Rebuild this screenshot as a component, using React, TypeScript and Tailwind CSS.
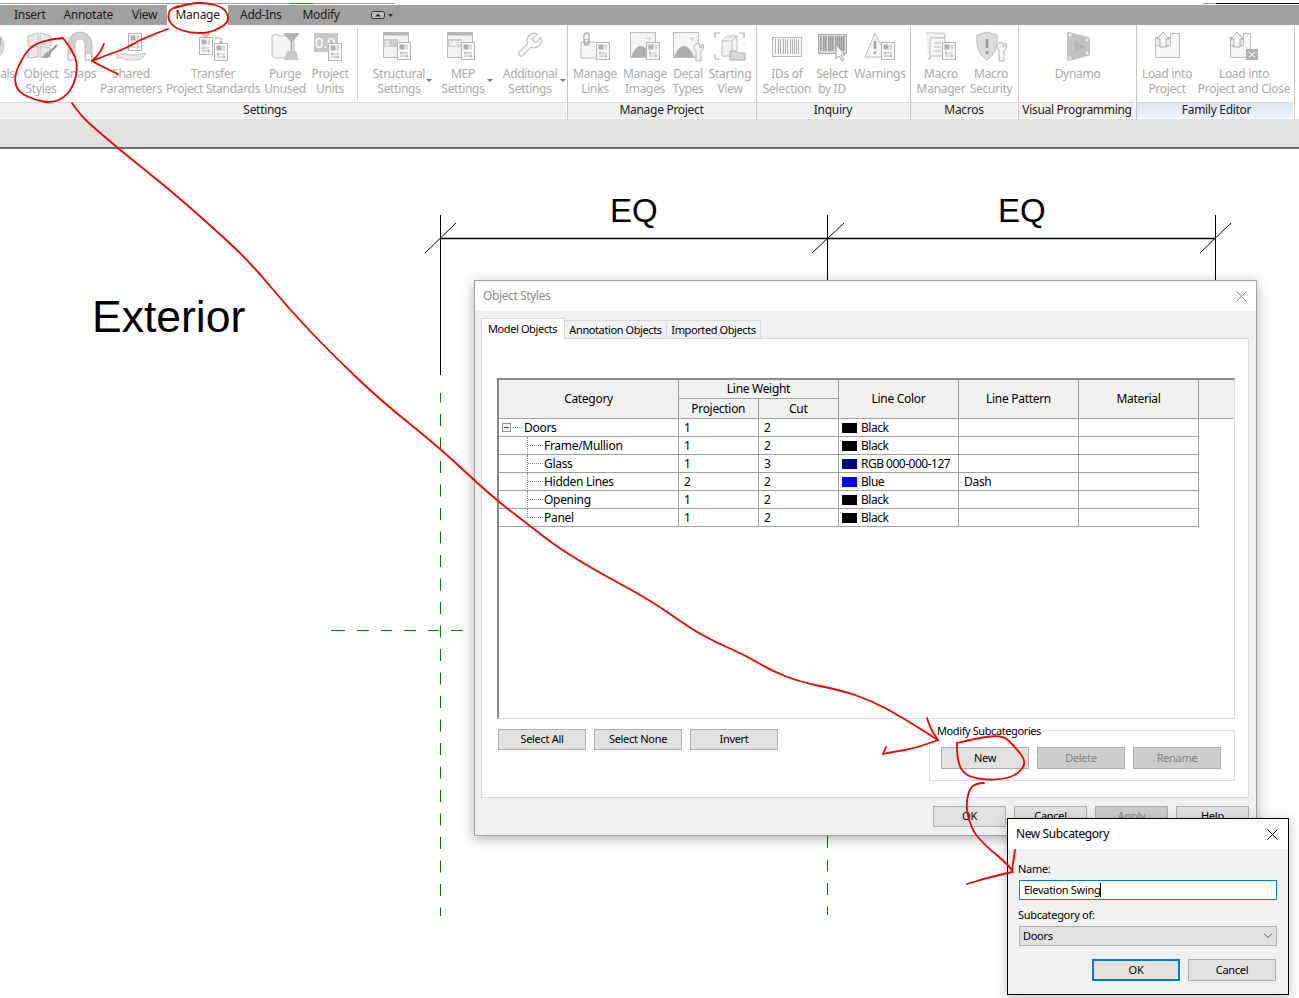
import type { ReactNode } from "react";

const line = "#bcbcbc";
const soft = "#e9e9e9";

// little document that sits on most of the ribbon icons
function Badge({ x, y }: { x: number; y: number }) {
  return (
    <g transform={`translate(${x} ${y})`}>
      <rect x="0.5" y="0.5" width="13" height="17" fill="#f9f9f9" stroke="#b4b4b4" />
      <rect x="2.5" y="2.5" width="5" height="5" fill="#b0b0b0" />
      <rect x="8.5" y="2.5" width="2.5" height="5" fill="#d4d4d4" />
      <path d="M3 11h8M3 14h8M5 9.5l-2 1.5 2 1.5M9 12.5l2 1.5-2 1.5" stroke="#aaa" strokeWidth="0.8" fill="none" />
    </g>
  );
}

function Ico({ children }: { children: ReactNode }) {
  return (
    <svg width="32" height="32" viewBox="0 0 32 32" className="shrink-0 overflow-visible">
      {children}
    </svg>
  );
}

const Materials = () => (
  <Ico>
    <circle cx="16" cy="16" r="14" fill="#d8d8d8" stroke="#c4c4c4" />
    <path d="M6 8h7v7H6zM20 8h7v7h-7zM13 15h7v7h-7zM6 22h7v5H6z" fill="#a9a9a9" />
  </Ico>
);

const ObjectStyles = () => (
  <Ico>
    <path d="M3 6l10-3v11L3 17zM15 3l11 3v10l-11-2zM3 19l10-3v11l-10 1zM15 16l10 2v9l-10 0z" fill={soft} stroke={line} />
    <path d="M32 15l-9 9" stroke="#9a9a9a" strokeWidth="2.4" />
    <path d="M24 22c-3 0-5 1-5 3l-2 3c4 1 8-1 9-4z" fill="#a2a2a2" />
  </Ico>
);

const Magnet = () => (
  <Ico>
    <path d="M4 30V14a12 12 0 0 1 24 0v16h-7V14a5 5 0 0 0-10 0v16z" fill="#d2d2d2" stroke="#bdbdbd" />
    <path d="M4.500 23h6v7h-6zM21.500 23h6v7h-6z" fill="#fafafa" stroke="#bdbdbd" />
  </Ico>
);

const SharedParams = () => (
  <Ico>
    <Badge x={13} y={3} />
    <path d="M2 24h8l6 1h6l9-2c-2 4-6 7-10 7H10l-3-2H2z" fill={soft} stroke="#c0c0c0" />
  </Ico>
);

const Transfer = () => (
  <Ico>
    <path d="M3 3h11l-5.500 6z" fill="#c6c6c6" />
    <Badge x={2} y={7} />
    <path d="M18 8h6v5M22 11l2 2 2-2" stroke="#a6a6a6" fill="none" />
    <path d="M18 14h11l-5.500 6z" fill="#c6c6c6" />
    <Badge x={17} y={13} />
  </Ico>
);

const Purge = () => (
  <Ico>
    <path d="M3 6c3-2 5-2 8 0h14v22H8c-3 0-5-1-5-3z" fill="#f4f4f4" stroke={line} />
    <path d="M14 3h17l-8.500 10z" fill="#b2b2b2" />
    <path d="M22.500 12v10" stroke="#aaa" strokeWidth="1.600" />
    <path d="M18 21h9l3 9H15z" fill="#c9c9c9" />
  </Ico>
);

const ProjectUnits = () => (
  <Ico>
    <rect x="0" y="3" width="24" height="19" fill="#c6c6c6" />
    <text x="1" y="18" fontSize="15" fill="#fff" fontFamily="Liberation Sans, sans-serif">0.0</text>
    <Badge x={14} y={13} />
  </Ico>
);

function SettingsIco({ label }: { label: string }) {
  return (
    <Ico>
      <rect x="0.500" y="2.500" width="25" height="25" fill="#f3f3f3" stroke={line} />
      <rect x="0.500" y="2.500" width="25" height="3" fill="#b6b6b6" />
      <rect x="0.500" y="9" width="15" height="8" fill="#cbcbcb" />
      <text x="2" y="15.500" fontSize="6.500" fontWeight="700" fill="#fff" fontFamily="Liberation Sans, sans-serif">{label}</text>
      <Badge x={14} y={12} />
    </Ico>
  );
}

const Wrench = () => (
  <Ico>
    <path
      transform="translate(1 1) scale(1.200)"
      d="M14.700 6.300a1 1 0 0 0 0 1.400l1.600 1.600a1 1 0 0 0 1.400 0l3.770-3.770a6 6 0 0 1-7.940 7.940l-6.910 6.910a2.120 2.120 0 0 1-3-3l6.910-6.910a6 6 0 0 1 7.940-7.940l-3.760 3.760z"
      fill="#f6f6f6"
      stroke="#bcbcbc"
      strokeWidth="0.900"
    />
  </Ico>
);

const Links = () => (
  <Ico>
    <path d="M2 12h14l6 6v10H2z" fill="#f5f5f5" stroke={line} />
    <rect x="5" y="3" width="5" height="12" rx="2.500" fill="none" stroke="#aaa" strokeWidth="1.300" />
    <circle cx="7.500" cy="11" r="2" fill="none" stroke="#aaa" />
    <Badge x={17} y={12} />
  </Ico>
);

const Images = () => (
  <Ico>
    <rect x="1.500" y="2.500" width="25" height="25" fill="#f4f4f4" stroke={line} />
    <path d="M2 27c3-8 7-11 10-11s8 4 10 11z" fill="#adadad" />
    <circle cx="20" cy="9" r="2" fill="#ddd" />
    <Badge x={17} y={12} />
  </Ico>
);

const Decals = () => (
  <Ico>
    <rect x="1.500" y="2.500" width="25" height="25" fill="#f4f4f4" stroke={line} />
    <path d="M2 27c3-8 7-11 10-11s8 4 10 11z" fill="#adadad" />
    <circle cx="20" cy="9" r="2" fill="#ddd" />
    <path d="M24 14a4.500 4.500 0 0 1 4 0v4l2-1v-3a4 4 0 0 1-1 7v10h-5V21a4 4 0 0 1 0-7z" fill="#f5f5f5" stroke="#b0b0b0" />
  </Ico>
);

const StartingView = () => (
  <Ico>
    <path d="M1 8V3h5M25 3h5v5M1 24v5h5M30 15v-1" fill="none" stroke="#adadad" strokeWidth="1.200" />
    <path d="M8 11l5-5h10v15l-5 5H8z" fill="#f2f2f2" stroke={line} />
    <path d="M8 11h10v15M18 11l5-5" fill="none" stroke={line} />
    <path d="M16 21h6l2 2h7v7H16z" fill="#dadada" stroke="#b0b0b0" />
  </Ico>
);

function Barcode({ dark }: { dark?: boolean }) {
  const bars = [3, 6, 8, 11, 13, 15, 18, 20, 22, 24, 26];
  return (
    <>
      {bars.map((b) => (
        <rect key={b} x={b + 1} y={dark ? 6 : 9} width={dark ? 1.600 : 1} height="15" fill={dark ? "#9c9c9c" : "#b3b3b3"} />
      ))}
    </>
  );
}

const IdsOf = () => (
  <Ico>
    <rect x="1.500" y="7.500" width="29" height="19" fill="#f7f7f7" stroke="#b8b8b8" />
    <Barcode />
  </Ico>
);

const SelectId = () => (
  <Ico>
    <rect x="2.500" y="4.500" width="28" height="19" fill="#dedede" stroke="#a6a6a6" />
    <Barcode dark />
    <path d="M20 14v15l3-3 3 5 2-1-3-5h4z" fill="#f5f5f5" stroke="#a6a6a6" />
  </Ico>
);

const Warnings = () => (
  <Ico>
    <path d="M11 3l-10 24h22z" fill="#f4f4f4" stroke={line} />
    <path d="M11 11v8M11 21.500v2.500" stroke="#a2a2a2" strokeWidth="2.600" />
    <Badge x={17} y={12} />
  </Ico>
);

const MacroManager = () => (
  <Ico>
    <path d="M1 3h16c2 0 3 1 3 3v2H6v18c0 2-1 3-3 3" fill="#f2f2f2" stroke={line} />
    <path d="M5 8h15v18H8c-2 0-3 1-3 3zM9 13h7M9 17h7M9 21h7" fill="#f7f7f7" stroke={line} />
    <Badge x={17} y={12} />
  </Ico>
);

const MacroSecurity = () => (
  <Ico>
    <path d="M12 2l10 3c1 10-1 19-10 25C3 24 1 15 2 5z" fill="#dcdcdc" stroke={line} />
    <path d="M12 9v9M12 21v3" stroke="#9c9c9c" strokeWidth="2.800" />
    <path d="M24 13a4.500 4.500 0 0 1 4 0v4l2-1v-3a4 4 0 0 1-1 7v11h-5V20a4 4 0 0 1 0-7z" fill="#f5f5f5" stroke="#b0b0b0" />
  </Ico>
);

const Dynamo = () => (
  <Ico>
    <path d="M7 2l19 5c2 1 2 2 2 3v13c0 2 0 2-2 3L7 31c-2 0-2-1-2-2V4c0-2 0-2 2-2z" fill="#c2c2c2" />
    <path d="M13 11l10 6-10 6z" fill="#b2b2b2" />
    <circle cx="8" cy="5" r="1.400" fill="#eee" />
    <circle cx="25" cy="10" r="1.400" fill="#eee" />
    <circle cx="25" cy="23" r="1.400" fill="#eee" />
    <circle cx="8" cy="28" r="1.400" fill="#eee" />
  </Ico>
);

const LoadProject = () => (
  <Ico>
    <path d="M4.500 15.500v12h24v-24h-9v12z" fill="#f6f6f6" stroke={line} />
    <rect x="4.500" y="7.500" width="15" height="8" fill="#ededed" stroke={line} />
    <path d="M12 2l6 7h-3v8H9V9H6z" fill="#f8f8f8" stroke="#a8a8a8" />
  </Ico>
);

const LoadClose = () => (
  <Ico>
    <path d="M2.500 15.500v12h20v-24h-7v12z" fill="#f6f6f6" stroke={line} />
    <rect x="2.500" y="7.500" width="13" height="8" fill="#ededed" stroke={line} />
    <path d="M9 2l6 7h-3v8H6V9H3z" fill="#f8f8f8" stroke="#a8a8a8" />
    <rect x="18" y="19" width="12" height="11" fill="#b4b4b4" />
    <path d="M21 22l6 5M27 22l-6 5" stroke="#fff" />
  </Ico>
);

function Caret({ className }: { className: string }) {
  return <span className={`absolute top-[54px] h-0 w-0 border-x-[3px] border-t-[3px] border-x-transparent border-t-[#777] ${className}`} />;
}

function RibbonItem({ icon, a, b, className, caret }: { icon: ReactNode; a: string; b?: string; className: string; caret?: string }) {
  return (
    <div className={`relative flex shrink-0 flex-col items-center pt-[5px] ${className}`}>
      {icon}
      <span className="mt-[4px] whitespace-nowrap leading-[15px]">{a}</span>
      {b && <span className="whitespace-nowrap leading-[15px]">{b}</span>}
      {caret && <Caret className={caret} />}
    </div>
  );
}

function RibbonPanel({ title, className, foot, children }: { title: string; className: string; foot?: string; children: ReactNode }) {
  return (
    <div className={`flex h-[94px] shrink-0 flex-col border-r border-[#c6c6c6] ${className}`}>
      <div className="flex h-[77px] text-[#a9a9a9]">{children}</div>
      <div className={`mr-px flex h-[16px] items-center justify-center border-t border-[#d8d8d8] pb-[2px] leading-[14px] whitespace-nowrap text-[#222] ${foot ?? "bg-[#f0f0f0]"}`}>
        {title}
      </div>
    </div>
  );
}

function Btn({ children, className, off, primary }: { children: string; className: string; off?: boolean; primary?: boolean }) {
  return (
    <div
      className={`flex shrink-0 items-center justify-center text-[11px] tracking-[-0.3px] ${primary ? "border-2 border-[#0078d7]" : "border border-[#adadad]"} ${off ? "bg-[#cccccc] text-[#838383]" : "bg-[#e1e1e1] text-black"} ${className}`}
    >
      {children}
    </div>
  );
}

const rows = [
  { name: "Frame/Mullion", p: "1", c: "2", color: "Black", sw: "bg-black" },
  { name: "Glass", p: "1", c: "3", color: "RGB 000-000-127", sw: "bg-[#00007f]" },
  { name: "Hidden Lines", p: "2", c: "2", color: "Blue", sw: "bg-[#0000ff]", pat: "Dash" },
  { name: "Opening", p: "1", c: "2", color: "Black", sw: "bg-black" },
  { name: "Panel", p: "1", c: "2", color: "Black", sw: "bg-black", last: true },
];

function Cell({ children, className = "" }: { children?: ReactNode; className?: string }) {
  return <div className={`flex h-[17px] items-center border-r border-[#a0a0a0] ${className}`}>{children}</div>;
}

function Row({ first, p, c, color, sw, pat }: { first: ReactNode; p: string; c: string; color: string; sw: string; pat?: string }) {
  return (
    <div className="grid h-[18px] w-[700px] grid-cols-[180px_80px_80px_120px_120px_120px] border-b border-[#a0a0a0]">
      <Cell>{first}</Cell>
      <Cell className="pl-[5px]">{p}</Cell>
      <Cell className="pl-[5px]">{c}</Cell>
      <Cell className="pl-[3px] tracking-[-0.5px]">
        <span className={`mr-[4px] h-[10px] w-[15px] ${sw}`} />
        {color}
      </Cell>
      <Cell className="pl-[5px]">{pat}</Cell>
      <Cell />
    </div>
  );
}

function ObjectStylesDialog() {
  return (
    <div className="absolute left-[474px] top-[280px] flex h-[556px] w-[783px] flex-col border border-[#a0a0a0] bg-[#f0f0f0] shadow-[0_3px_12px_rgba(0,0,0,0.3)]">
      <div className="flex h-[30px] shrink-0 items-center justify-between bg-white pl-[8px] pr-[9px] tracking-[-0.4px] text-[#8c8c8c]">
        <span>Object Styles</span>
        <svg width="11" height="11" viewBox="0 0 11 11"><path d="M0.500 0.500l10 10M10.500 0.500l-10 10" stroke="#8c8c8c" /></svg>
      </div>
      <div className="mt-[7px] flex h-[21px] items-end whitespace-nowrap pl-[6px] text-[11px] tracking-[-0.4px]">
        <div className="relative z-10 flex h-[21px] w-[84px] items-start border-x border-t border-[#d9d9d9] bg-white pl-[6px] pt-[2px]">Model Objects</div>
        <div className="flex h-[19px] w-[102px] items-center justify-center border-r border-t border-[#d9d9d9]">Annotation Objects</div>
        <div className="flex h-[19px] w-[94px] items-center justify-center border-r border-t border-[#d9d9d9]">Imported Objects</div>
      </div>
      <div className="-mt-px ml-[6px] h-[460px] w-[768px] border border-[#d9d9d9] bg-white pl-[15px] pt-[39px]">
        <div className="h-[341px] w-[738px] border-b border-l-2 border-r border-t-2 border-[#dcdcdc] border-l-[#8a8a8a] border-t-[#8a8a8a]">
          <div className="grid h-[39px] grid-cols-[180px_160px_120px_120px_120px_1fr] border-b border-[#a0a0a0] bg-[#f0f0f0]">
            <div className="flex items-center justify-center border-r border-[#a0a0a0]">Category</div>
            <div className="flex flex-col border-r border-[#a0a0a0]">
              <div className="flex h-[19px] items-center justify-center border-b border-[#a0a0a0]">Line Weight</div>
              <div className="grid flex-1 grid-cols-2">
                <div className="flex items-center justify-center border-r border-[#a0a0a0]">Projection</div>
                <div className="flex items-center justify-center">Cut</div>
              </div>
            </div>
            <div className="flex items-center justify-center border-r border-[#a0a0a0]">Line Color</div>
            <div className="flex items-center justify-center border-r border-[#a0a0a0]">Line Pattern</div>
            <div className="flex items-center justify-center border-r border-[#a0a0a0]">Material</div>
            <div />
          </div>
          <Row
            p="1"
            c="2"
            color="Black"
            sw="bg-black"
            first={
              <div className="flex items-center pl-[3px]">
                <span className="flex h-[9px] w-[9px] items-center justify-center border border-[#919191] bg-[#efefef]">
                  <span className="h-px w-[5px] bg-[#444]" />
                </span>
                <span className="mx-[2px] w-[9px] border-t border-dotted border-[#888]" />
                <span>Doors</span>
              </div>
            }
          />
          {rows.map((r) => (
            <Row
              key={r.name}
              p={r.p}
              c={r.c}
              color={r.color}
              sw={r.sw}
              pat={r.pat}
              first={
                <div className="ml-[28px] flex h-full items-center">
                  <span className={`w-px self-start border-l border-dotted border-[#888] ${r.last ? "h-[9px]" : "h-[18px]"}`} />
                  <span className="w-[15px] border-t border-dotted border-[#888]" />
                  <span className="pl-px">{r.name}</span>
                </div>
              }
            />
          ))}
        </div>
        <div className="mt-[10px] flex w-[738px] items-start justify-between">
          <div className="flex gap-[8px] pl-px">
            <Btn className="h-[21px] w-[88px]">Select All</Btn>
            <Btn className="h-[21px] w-[88px]">Select None</Btn>
            <Btn className="h-[21px] w-[88px]">Invert</Btn>
          </div>
          <div className="relative mt-px flex h-[51px] w-[306px] gap-[8px] border border-[#dcdcdc] pl-[11px] pt-[16px]">
            <span className="absolute -top-[8px] left-[7px] whitespace-nowrap bg-white pr-[2px] text-[11px] leading-[15px] tracking-[-0.4px]">Modify Subcategories</span>
            <Btn className="h-[22px] w-[88px]">New</Btn>
            <Btn className="h-[22px] w-[88px]" off>Delete</Btn>
            <Btn className="h-[22px] w-[88px]" off>Rename</Btn>
          </div>
        </div>
      </div>
      <div className="mt-[8px] flex w-[774px] justify-end gap-[8px]">
        <Btn className="h-[21px] w-[73px]">OK</Btn>
        <Btn className="h-[21px] w-[73px]">Cancel</Btn>
        <Btn className="h-[21px] w-[73px]" off>Apply</Btn>
        <Btn className="h-[21px] w-[73px]">Help</Btn>
      </div>
    </div>
  );
}

function NewSubcategoryDialog() {
  return (
    <div className="absolute left-[1007px] top-[818px] flex h-[177px] w-[282px] flex-col border border-black bg-[#f0f0f0] shadow-[0_3px_12px_rgba(0,0,0,0.25)]">
      <div className="flex h-[30px] shrink-0 items-center justify-between bg-white pl-[8px] pr-[10px] tracking-[-0.4px] text-black">
        <span>New Subcategory</span>
        <svg width="11" height="11" viewBox="0 0 11 11"><path d="M0.500 0.500l10 10M10.500 0.500l-10 10" stroke="#000" /></svg>
      </div>
      <div className="flex flex-col px-[10px] text-[11px] tracking-[-0.3px] text-black">
        <span className="mt-[12px] leading-[15px]">Name:</span>
        <div className="ml-px mt-[4px] flex h-[20px] w-[258px] items-center border border-[#0078d7] bg-white pl-[4px]">
          <span>Elevation Swing</span>
          <span className="h-[14px] w-px bg-black" />
        </div>
        <span className="mt-[7px] leading-[15px]">Subcategory of:</span>
        <div className="ml-px mt-[4px] flex h-[20px] w-[258px] items-center justify-between border border-[#adadad] bg-[#e1e1e1] pl-[3px] pr-[3px]">
          <span>Doors</span>
          <svg width="10" height="6" viewBox="0 0 10 6"><path d="M1 0.500l4 4 4-4" fill="none" stroke="#555" /></svg>
        </div>
        <div className="mt-[13px] flex w-[258px] justify-end gap-[8px]">
          <Btn className="h-[22px] w-[88px]" primary>OK</Btn>
          <Btn className="h-[22px] w-[88px]">Cancel</Btn>
        </div>
      </div>
    </div>
  );
}

function Drafting() {
  return (
    <svg width="1299" height="998" className="absolute left-0 top-0">
      <path d="M440.500 215v160M827.500 215v70M1215.500 215v70" stroke="#000" strokeWidth="1" fill="none" />
      <path d="M440 238.500h776" stroke="#000" strokeWidth="1.500" />
      <path d="M425 253l31-30M812 253l32-30M1200 253l31-30" stroke="#000" fill="none" />
      <path d="M440.500 393V916" stroke="#008000" strokeDasharray="12 11.500" strokeDashoffset="2.500" />
      <path d="M331 630.500h14M357 630.500h12M381 630.500h11M404 630.500h12M428 630.500h11M451 630.500h12" stroke="#008000" />
      <path d="M827.500 836v79" stroke="#1a6a1a" strokeDasharray="12 11.500" />
    </svg>
  );
}

// hand drawn look: run a curve through the midpoints, ends stay on their points
function inkPath(pts: number[][]) {
  let d = `M${pts[0][0]} ${pts[0][1]}`;
  for (let i = 1; i < pts.length - 1; i++) {
    const mx = (pts[i][0] + pts[i + 1][0]) / 2;
    const my = (pts[i][1] + pts[i + 1][1]) / 2;
    d += ` Q${pts[i][0]} ${pts[i][1]} ${mx} ${my}`;
  }
  const last = pts[pts.length - 1];
  return `${d} L${last[0]} ${last[1]}`;
}

const ink: number[][][] = [
  [[168, 29], [143, 38], [127, 48], [107, 55], [92, 61]],
  [[104, 44], [100, 53], [92, 61]],
  [[92, 61], [103, 67], [118, 74]],
  [[175, 8], [190, 3], [208, 3], [222, 7], [228, 14], [228, 22], [220, 28], [208, 33], [190, 33], [175, 28], [168, 20], [169, 10], [178, 6]],
  [[63, 38], [45, 40], [30, 47], [20, 62], [14, 78], [18, 92], [35, 100], [52, 103], [65, 97], [74, 85], [78, 65], [72, 50], [66, 42], [63, 38]],
  [[72, 103], [80, 115], [100, 133], [130, 158], [170, 190], [210, 225], [250, 262], [290, 310], [330, 352], [380, 400], [440, 448], [490, 495], [530, 526], [560, 549], [600, 573], [650, 600], [690, 628], [715, 642], [745, 655], [770, 670], [800, 682], [840, 690], [870, 700], [900, 716], [938, 740]],
  [[927, 718], [930, 728], [938, 740]],
  [[938, 740], [917, 748], [887, 753], [883, 754]],
  [[883, 754], [886, 747]],
  [[957, 743], [977, 738], [1003, 735], [1015, 747], [1027, 762], [1017, 775], [1000, 780], [977, 779], [962, 773], [957, 757], [957, 743]],
  [[984, 783], [975, 783], [968, 792], [966, 810], [973, 832], [987, 847], [997, 855], [1008, 865], [1013, 872]],
  [[1015, 850], [1013, 863], [1012, 872]],
  [[1012, 872], [990, 877], [967, 884]],
];

function RedInk() {
  return (
    <svg width="1299" height="998" className="pointer-events-none absolute left-0 top-0 z-30">
      {ink.map((pts, i) => (
        <path key={i} d={inkPath(pts)} fill="none" stroke="#f00000" strokeWidth="1.800" strokeLinejoin="round" strokeLinecap="round" />
      ))}
    </svg>
  );
}

export default function App() {
  return (
    <div className="relative h-[998px] w-[1299px] overflow-hidden bg-white font-['Noto_Sans',sans-serif] text-[12px] tracking-[-0.3px] text-black">
      <Drafting />
      <span className="absolute left-[92px] top-[292px] font-['Liberation_Sans',sans-serif] text-[44.500px] leading-[50px] tracking-normal">Exterior</span>
      <span className="absolute left-[610px] top-[192px] font-['Liberation_Sans',sans-serif] text-[33px] leading-[37px] tracking-normal">EQ</span>
      <span className="absolute left-[998px] top-[192px] font-['Liberation_Sans',sans-serif] text-[33px] leading-[37px] tracking-normal">EQ</span>

      <div className="relative flex flex-col">
        {/* stray bits of the window above the tabs */}
        <div className="mt-[3px] flex h-[2px]">
          <div className="flex h-[1px] w-[395px] justify-start bg-[#9a9a9a]">
            <div className="ml-[289px] h-px w-[24px] bg-[#2a6fb5]" />
          </div>
          <div className="ml-[808px] h-px w-[13px] bg-[#9a9a9a]" />
          <div className="h-px flex-1 bg-black" />
        </div>
        <div className="flex h-[20px] items-center bg-[#a0a0a0] text-[#1c1c1c]">
          <span className="ml-[14px]">Insert</span>
          <span className="ml-[18px]">Annotate</span>
          <span className="ml-[19px]">View</span>
          <span className="ml-[10px] flex h-full w-[61px] items-center justify-center bg-white">Manage</span>
          <span className="ml-[12px]">Add-Ins</span>
          <span className="ml-[21px]">Modify</span>
          <svg width="22" height="10" viewBox="0 0 22 10" className="ml-[31px]">
            <rect x="0.500" y="1.500" width="13" height="7" rx="2" fill="#bdbdbd" stroke="#333" />
            <path d="M4 6.500l3-3 3 3z" fill="#333" />
            <path d="M17 4h5l-2.500 3z" fill="#333" />
          </svg>
        </div>
        <div className="flex h-[94px] bg-white">
          <RibbonPanel title="Settings" className="-ml-[36px] w-[604px]">
            <RibbonItem icon={<Materials />} a="Materials" className="w-[52px]" />
            <RibbonItem icon={<ObjectStyles />} a="Object" b="Styles" className="w-[50px]" />
            <RibbonItem icon={<Magnet />} a="Snaps" className="w-[28px]" />
            <RibbonItem icon={<SharedParams />} a="Shared" b="Parameters" className="w-[74px]" />
            <RibbonItem icon={<Transfer />} a="Transfer" b="Project Standards" className="w-[90px]" />
            <RibbonItem icon={<Purge />} a="Purge" b="Unused" className="w-[54px]" />
            <RibbonItem icon={<ProjectUnits />} a="Project" b="Units" className="w-[36px]" />
            <div className="ml-[9px] mt-[3px] h-[72px] w-px shrink-0 bg-[#c6c6c6]" />
            <RibbonItem icon={<SettingsIco label="S" />} a="Structural" b="Settings" className="w-[82px]" caret="left-[68px]" />
            <RibbonItem icon={<SettingsIco label="MEP" />} a="MEP" b="Settings" className="w-[46px]" caret="left-[47px]" />
            <RibbonItem icon={<Wrench />} a="Additional" b="Settings" className="ml-[11px] w-[66px]" caret="left-[63px]" />
          </RibbonPanel>
          <RibbonPanel title="Manage Project" className="w-[189px]">
            <RibbonItem icon={<Links />} a="Manage" b="Links" className="w-[54px]" />
            <RibbonItem icon={<Images />} a="Manage" b="Images" className="w-[46px]" />
            <RibbonItem icon={<Decals />} a="Decal" b="Types" className="w-[40px]" />
            <RibbonItem icon={<StartingView />} a="Starting" b="View" className="w-[44px]" />
          </RibbonPanel>
          <RibbonPanel title="Inquiry" className="w-[154px]">
            <RibbonItem icon={<IdsOf />} a="IDs of" b="Selection" className="w-[60px]" />
            <RibbonItem icon={<SelectId />} a="Select" b="by ID" className="w-[30px]" />
            <RibbonItem icon={<Warnings />} a="Warnings" className="ml-[3px] w-[60px]" />
          </RibbonPanel>
          <RibbonPanel title="Macros" className="w-[108px]">
            <RibbonItem icon={<MacroManager />} a="Macro" b="Manager" className="w-[60px]" />
            <RibbonItem icon={<MacroSecurity />} a="Macro" b="Security" className="w-[40px]" />
          </RibbonPanel>
          <RibbonPanel title="Visual Programming" className="w-[118px]">
            <RibbonItem icon={<Dynamo />} a="Dynamo" className="w-[117px]" />
          </RibbonPanel>
          <RibbonPanel title="Family Editor" className="w-[158px]" foot="bg-gradient-to-b from-[#dde4f4] to-[#f0f2fa] pl-[3px]">
            <RibbonItem icon={<LoadProject />} a="Load into" b="Project" className="w-[60px]" />
            <RibbonItem icon={<LoadClose />} a="Load into" b="Project and Close" className="w-[94px]" />
          </RibbonPanel>
        </div>
        <div className="h-[30px] border-b-2 border-[#6e6e6e] bg-[#e1e1e1]" />
      </div>

      <ObjectStylesDialog />
      <NewSubcategoryDialog />
      <RedInk />
    </div>
  );
}
